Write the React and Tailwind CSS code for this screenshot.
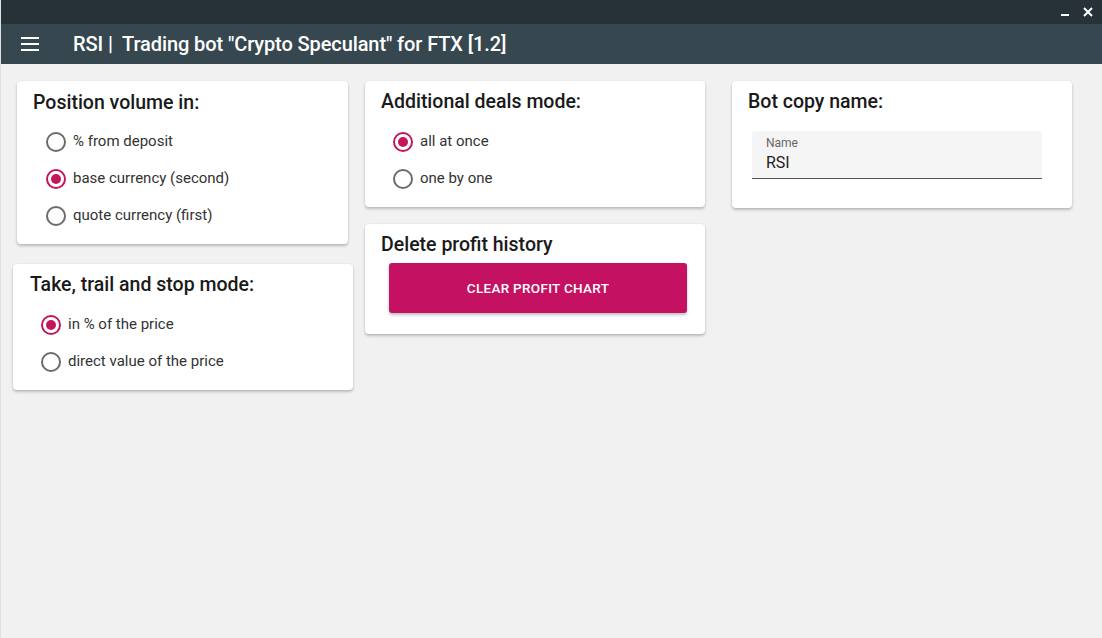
import React from "react";

const font = { fontFamily: "Roboto, 'Noto Sans', sans-serif" };

function Radio({ checked, label }) {
  return (
    <div className="flex items-center h-[37px]">
      <span
        className={
          "w-[20px] h-[20px] rounded-full border-2 flex items-center justify-center " +
          (checked ? "border-[#c2185b]" : "border-[#6b6b6b]")
        }
      >
        {checked && <span className="w-[10px] h-[10px] rounded-full bg-[#c2185b]" />}
      </span>
      <span className="ml-[7px] text-[15px] text-[#333]">{label}</span>
    </div>
  );
}

function Card({ className, children }) {
  return (
    <div
      className={
        "bg-white rounded-[4px] shadow-[0_2px_3px_rgba(0,0,0,0.22),0_0_2px_rgba(0,0,0,0.08)] " +
        className
      }
    >
      {children}
    </div>
  );
}

const titleCls = "text-[19.5px] font-medium text-[#1a1a1a] h-[24px] leading-[24px]";

export default function App() {
  return (
    <div className="w-[1102px] h-[638px] flex flex-col bg-[#f1f1f1] overflow-hidden border-l border-l-[#e0e0e0]" style={font}>
      <div className="h-[24px] bg-[#263238] flex items-center justify-end pr-[8px] gap-[14px] text-white">
        <span className="w-[8px] h-[2px] bg-white mt-[6px]" />
        <svg width="10" height="10" viewBox="0 0 10 10" className="mr-[1px]">
          <path d="M1 1 L9 9 M9 1 L1 9" stroke="white" strokeWidth="2" />
        </svg>
      </div>
      <div className="h-[40px] bg-[#37474f] flex items-center">
        <svg width="18" height="14" viewBox="0 0 18 14" className="ml-[20px]">
          <path d="M0 1 H18 M0 7 H18 M0 13 H18" stroke="white" strokeWidth="2" />
        </svg>
        <span className="ml-[34px] text-[20px] text-white font-medium tracking-[-0.1px]">
          RSI |&nbsp; Trading bot "Crypto Speculant" for FTX [1.2]
        </span>
      </div>
      <div className="flex items-start">
        <div className="flex flex-col">
          <Card className="ml-[16px] mt-[17px] w-[331px] h-[163px] pt-[10px] pl-[16px]">
            <div className={titleCls}>Position volume in:</div>
            <div className="mt-[8px] pl-[13px]">
              <Radio label="% from deposit" />
              <Radio checked label="base currency (second)" />
              <Radio label="quote currency (first)" />
            </div>
          </Card>
          <Card className="ml-[12px] mt-[20px] w-[340px] h-[126px] pt-[9px] pl-[17px]">
            <div className={titleCls}>Take, trail and stop mode:</div>
            <div className="mt-[9px] pl-[11px]">
              <Radio checked label="in % of the price" />
              <Radio label="direct value of the price" />
            </div>
          </Card>
        </div>
        <div className="flex flex-col ml-[12px]">
          <Card className="mt-[17px] w-[340px] h-[126px] pt-[9px] pl-[16px]">
            <div className={titleCls}>Additional deals mode:</div>
            <div className="mt-[9px] pl-[12px]">
              <Radio checked label="all at once" />
              <Radio label="one by one" />
            </div>
          </Card>
          <Card className="mt-[17px] w-[340px] h-[110px] pt-[9px] px-[16px]">
            <div className={titleCls}>Delete profit history</div>
            <button className="mt-[6px] ml-[8px] w-[298px] h-[50px] bg-[#c51162] rounded-[3px] text-white text-[13.5px] font-medium tracking-[0.3px] shadow-[0_2px_3px_rgba(0,0,0,0.25)]">
              CLEAR PROFIT CHART
            </button>
          </Card>
        </div>
        <Card className="ml-[27px] mt-[17px] w-[340px] h-[127px] pt-[9px] pl-[16px]">
          <div className={titleCls}>Bot copy name:</div>
          <div className="mt-[17px] ml-[4px] w-[290px] h-[48px] bg-[#f5f5f5] border-b border-b-[#555] rounded-t-[3px] pl-[14px] pt-[5px]">
            <div className="text-[12px] text-[#666] leading-[15px]">Name</div>
            <div className="text-[16px] text-[#222] leading-[20px] mt-[2px]">RSI</div>
          </div>
        </Card>
      </div>
    </div>
  );
}
